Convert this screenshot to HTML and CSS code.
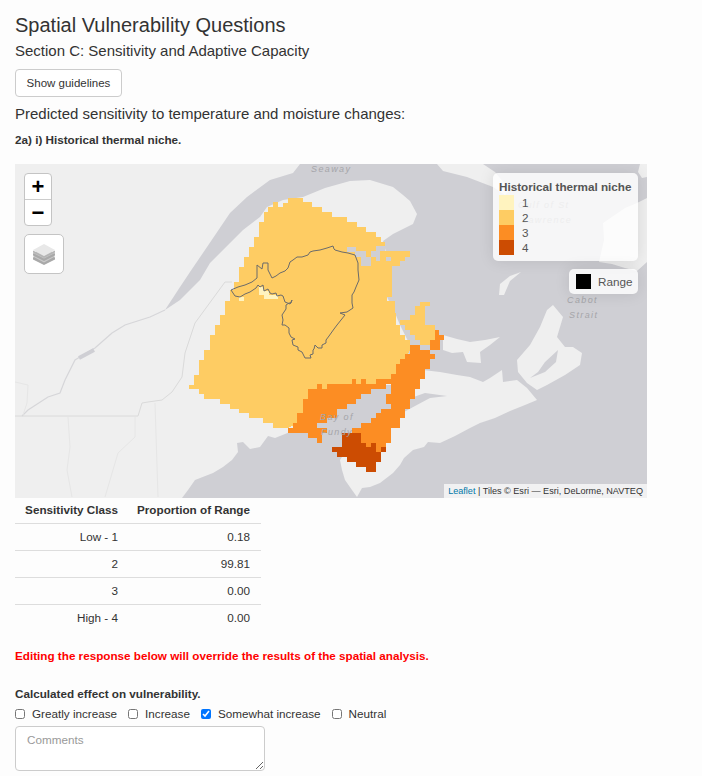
FILE: index.html
```html
<!DOCTYPE html>
<html lang="en">
<head>
  <meta charset="UTF-8">
  <title>Spatial Vulnerability Questions</title>
  <link rel="stylesheet" href="styles.css">
</head>
<body>
  <h1>Spatial Vulnerability Questions</h1>
  <h2>Section C: Sensitivity and Adaptive Capacity</h2>
  <button class="btn">Show guidelines</button>
  <h3>Predicted sensitivity to temperature and moisture changes:</h3>
  <p class="question">2a) i) Historical thermal niche.</p>

  <div class="map">
    <svg class="map-svg" viewBox="15 164 632 334" width="632" height="334">
      <rect class="land" x="15" y="164" width="632" height="334"/>
      <!-- water -->
      <path class="water" d="M300 164 L293 173 L270 180 L247 197 L230 213 L207 247 L190 272 L180 287 L165 310 L180 300 L200 280 L210 263 L230 243 L243 230 L260 217 L267 207 L283 200 L303 197 L325 188 L350 181 L370 180 L393 187 L403 195 L410 201 L417 214 L413 224 L393 234 L383 241 L386 252 L392 277 L387 297 L395 313 L400 325 L410 345 L405 370 L395 385 L370 385 L310 395 L295 430 L275 438 L268 436 L260 447 L250 449 L243 442 L237 443 L238 452 L232 460 L223 467 L213 473 L195 480 L188 490 L182 498 L647 498 L647 164 Z"/>
      <path class="land" d="M437 164 L443 171 L467 177 L493 187 L505 195 L510 190 L495 172 L483 164 Z"/>
      <path class="land" d="M640 164 L638 172 L642 178 L647 177 L647 164 Z"/>
      <path class="land" d="M647 198 L637 203 L625 208 L603 223 L604 240 L599 262 L612 264 L625 268 L637 271 L647 262 Z"/>
      <!-- maritimes -->
      <path class="land" d="M340 460 L342 470 L345 480 L352 490 L357 497 L362 488 L370 487 L380 483 L393 473 L400 465 L404 458 L413 450 L424 447 L428 442 L440 443 L455 436 L470 428 L480 423 L495 418 L510 411 L525 405 L537 400 L527 388 L517 380 L503 382 L502 370 L490 378 L483 382 L470 377 L457 375 L440 372 L423 370 L418 372 L412 385 L400 400 L395 415 L385 430 L370 440 L350 445 Z"/>
      <path class="water" d="M408 399 L425 393 L447 396 L430 398 L415 406 L404 412 Z"/>
      <path class="land" d="M443 335 L457 339 L470 342 L485 340 L500 337 L490 345 L480 352 L481 363 L467 362 L463 352 L452 353 L443 350 Z"/>
      <path class="land" d="M553 305 L563 317 L557 337 L565 347 L573 347 L582 353 L580 365 L565 375 L547 385 L537 390 L527 383 L518 372 L517 360 L530 345 L540 327 L547 310 Z"/>
      <path class="water" d="M530 378 L538 372 L545 362 L558 350 L556 362 L545 372 Z"/>
      <path class="land" d="M499 295 L500 284 L510 276 L521 272 L510 281 L504 295 Z"/>
      <!-- rivers and borders -->
      <path class="river" d="M165 310 L150 317 L125 325 L112 333 L95 348 L75 360 L65 380 L60 393 L48 397 L28 410 L22 416"/>
      <path class="wide-river" d="M79 358 L94 350"/>
      <path class="border" d="M15 416 L138 416 L142 403 L148 402 L162 400 L172 392 L182 377 L185 353 L195 323 L225 282 L232 282"/>
      <path class="border-thin" d="M155 403 L158 497 M135 417 L135 437 L118 453 L105 497 M68 417 L70 447 L67 470 L72 497 M15 382 L28 385 L27 403 L23 415"/>

      <!-- raster -->
      <g class="raster">
        <path class="c2" d="M288 198 L303 198 L303 202 L312 202 L312 207 L322 207 L322 212 L332 212 L332 217 L347 217 L347 222 L357 222 L357 227 L366 227 L366 232 L376 232 L376 237 L381 237 L381 242 L385 242 L385 251 L410 251 L410 257 L405 257 L405 261 L400 261 L400 266 L392 266 L392 297 L387 297 L387 301 L395 301 L395 313 L396 313 L396 325 L400 325 L400 335 L405 335 L405 340 L410 340 L410 350 L400 370 L380 388 L320 395 L305 420 L288 428 L273 428 L273 423 L263 423 L263 418 L249 418 L249 413 L239 413 L239 409 L230 409 L230 404 L220 404 L220 399 L204 399 L204 394 L199 394 L199 389 L189 389 L189 385 L194 385 L194 375 L199 375 L199 360 L204 360 L204 350 L210 350 L210 335 L215 335 L215 325 L220 325 L220 315 L225 315 L225 301 L230 301 L230 290 L234 290 L234 282 L239 282 L239 267 L244 267 L244 257 L249 257 L249 247 L254 247 L254 237 L259 237 L259 222 L264 222 L264 212 L268 212 L268 207 L273 207 L273 202 L278 202 L278 207 L283 207 L283 203 L288 203 Z"/>
        <path class="c2" d="M420 302 L430 302 L430 306 L425 306 L425 325 L435 325 L435 340 L430 340 L430 345 L420 345 L420 340 L415 340 L415 335 L410 335 L410 330 L405 330 L405 325 L400 325 L400 320 L410 320 L410 315 L415 315 L415 306 L420 306 Z"/>
        <path class="hole" d="M347 247 H356 V251 H366 V257 H371 V266 H361 V257 H355 V252 H347 Z M371 251 H376 V246 H385 V251 H380 V261 H376 V257 H371 Z M386 257 H391 V261 H386 Z"/>
        <path class="c1" d="M239 297 h5 v4 h-5 Z M259 287 h5 v4 h5 v4 h9 v4 h-14 v-4 h-5 Z"/>
        <path class="c3" d="M288 428 L293 428 L293 423 L297 423 L297 413 L303 413 L303 399 L308 399 L308 389 L317 389 L317 384 L322 384 L322 389 L327 389 L327 384 L352 384 L352 379 L356 379 L356 384 L361 384 L361 379 L366 379 L366 384 L376 384 L376 379 L391 379 L391 374 L396 374 L396 364 L400 364 L400 359 L405 359 L405 354 L410 354 L410 345 L420 345 L420 350 L430 350 L430 340 L435 340 L435 330 L439 330 L439 335 L444 335 L444 340 L440 340 L440 350 L430 350 L430 354 L435 354 L435 359 L430 359 L430 369 L425 369 L425 379 L420 379 L420 389 L415 389 L415 399 L410 399 L410 409 L405 409 L405 418 L400 418 L400 428 L391 428 L391 443 L386 443 L386 447 L381 447 L381 452 L376 452 L376 443 L371 443 L371 447 L366 447 L366 443 L361 443 L361 433 L352 433 L352 428 L361 428 L361 423 L371 423 L371 418 L376 418 L376 413 L381 413 L381 409 L391 409 L391 404 L386 404 L386 394 L391 394 L391 384 L386 384 L386 389 L371 389 L371 394 L361 394 L361 399 L356 399 L356 404 L347 404 L347 409 L337 409 L337 418 L327 418 L327 423 L317 423 L317 428 L327 428 L327 433 L322 433 L322 443 L317 443 L317 438 L308 438 L308 433 L293 433 L293 438 L293 433 L288 433 Z"/>
        <path class="c4" d="M342 433 L361 433 L361 443 L366 443 L366 447 L371 447 L371 443 L376 443 L376 452 L381 452 L381 462 L376 462 L376 472 L366 472 L366 467 L356 467 L356 462 L347 462 L347 457 L337 457 L337 452 L332 452 L332 447 L342 447 Z M381 447 h5 v5 h-5 Z"/>
      </g>

      <path class="outline" d="M231 290 L238 287 L245 285 L252 282 L257 278 L257 265 L262 269 L263 263 L268 263 L268 270 L272 278 L276 276 L280 273 L285 271 L288 268 L290 262 L293 260 L297 257 L302 257 L308 255 L310 252 L313 251 L320 250 L327 248 L333 246 L334 249 L335 250 L342 252 L348 253 L355 255 L358 263 L358 270 L359 280 L356 287 L354 292 L352 295 L352 303 L353 308 L347 312 L340 313 L345 315 L341 320 L337 325 L334 329 L329 336 L326 340 L326 343 L322 345 L322 348 L318 348 L315 345 L314 349 L313 350 L313 354 L310 355 L311 358 L307 358 L305 358 L302 352 L298 350 L298 347 L293 345 L292 340 L295 339 L291 337 L289 333 L289 328 L285 325 L282 325 L283 320 L282 315 L286 309 L286 305 L289 303 L291 303 L292 300 L290 304 L285 302 L283 296 L281 295 L277 296 L276 293 L272 294 L270 293 L268 289 L264 291 L263 285 L260 287 L258 285 L256 288 L250 292 L245 294 L240 297 L235 296 Z"/>

      <!-- labels -->
      <text class="label" x="311" y="172">Seaway</text>
      <text class="label" x="320" y="420">Bay of</text>
      <text class="label" x="321" y="435">Fundy</text>
      <text class="label" x="567" y="303">Cabot</text>
      <text class="label" x="569" y="318">Strait</text>
      <text class="label" x="518" y="208">Gulf of St</text>
      <text class="label" x="522" y="223">Lawrence</text>
    </svg>

    <div class="controls">
      <div class="zoom">
        <a class="zoom-btn">+</a>
        <a class="zoom-btn">&minus;</a>
      </div>
      <div class="layers">
        <svg width="24" height="23" viewBox="0 0 24 23">
          <path fill="#a9a9a9" d="M12 9 L23 14.5 V16.5 L12 22 L1 16.5 V14.5 Z"/>
          <path fill="#c9c9c9" d="M12 8 L23 13.5 L12 19.5 L1 13.5 Z"/>
          <path fill="#a9a9a9" d="M12 5 L23 10.5 V12.5 L12 18 L1 12.5 V10.5 Z"/>
          <path fill="#c9c9c9" d="M12 4.5 L23 10 L12 15.5 L1 10 Z"/>
          <path fill="#b5b5b5" d="M1 7.5 L12 13 L23 7.5 V9.5 L12 15 L1 9.5 Z"/>
          <path fill="#e8e8e8" d="M12 1 L23 7 L12 13 L1 7 Z"/>
        </svg>
      </div>
    </div>

    <div class="legend">
      <div class="legend-title">Historical thermal niche</div>
      <div class="legend-row"><i class="swatch s1"></i>1</div>
      <div class="legend-row"><i class="swatch s2"></i>2</div>
      <div class="legend-row"><i class="swatch s3"></i>3</div>
      <div class="legend-row"><i class="swatch s4"></i>4</div>
    </div>
    <div class="legend legend-range">
      <i class="range-box"></i>Range
    </div>
    <div class="attribution"><a>Leaflet</a> | Tiles &copy; Esri &mdash; Esri, DeLorme, NAVTEQ</div>
  </div>

  <table class="results">
    <thead>
      <tr><th>Sensitivity Class</th><th>Proportion of Range</th></tr>
    </thead>
    <tbody>
      <tr><td>Low - 1</td><td>0.18</td></tr>
      <tr><td>2</td><td>99.81</td></tr>
      <tr><td>3</td><td>0.00</td></tr>
      <tr><td>High - 4</td><td>0.00</td></tr>
    </tbody>
  </table>

  <p class="warning">Editing the response below will override the results of the spatial analysis.</p>

  <div class="field-label">Calculated effect on vulnerability.</div>
  <div class="options">
    <label><input type="checkbox">Greatly increase</label>
    <label><input type="checkbox">Increase</label>
    <label><input type="checkbox" checked>Somewhat increase</label>
    <label><input type="checkbox">Neutral</label>
  </div>
  <textarea class="comments" placeholder="Comments"></textarea>
</body>
</html>
```

FILE: styles.css
```css
body {
  margin: 0;
  padding: 14px 15px 0;
  background: #fdfdfd;
  color: #333;
  font-family: "Liberation Sans", Arial, sans-serif;
  font-size: 11.7px;
  line-height: 1.42857;
  height: 762px;
  overflow: hidden;
}
h1 {
  margin: 0;
  font-size: 20px;
  font-weight: 400;
  line-height: 22px;
}
h2 {
  margin: 5px 0 0;
  font-size: 15px;
  font-weight: 400;
  line-height: 20px;
}
.btn {
  display: block;
  margin-top: 8px;
  width: 107px;
  height: 28px;
  padding: 0;
  background: #fff;
  border: 1px solid #ccc;
  border-radius: 4px;
  color: #333;
  font: 11.5px "Liberation Sans", Arial, sans-serif;
}
h3 {
  margin: 7px 0 0;
  font-size: 15px;
  font-weight: 400;
  line-height: 20px;
}
.question {
  margin: 7px 0 0;
  font-weight: 700;
  line-height: 17px;
}

.map {
  position: relative;
  margin-top: 16px;
  width: 632px;
  height: 334px;
  overflow: hidden;
}
.map-svg {
  display: block;
}
.land { fill: #efefef; }
.water { fill: #cfcfd4; }
.river { fill: none; stroke: #d6d6d9; stroke-width: 1.2; }
.wide-river { fill: none; stroke: #cfcfd4; stroke-width: 4; }
.border { fill: none; stroke: #dadada; stroke-width: 1; }
.border-thin { fill: none; stroke: #e6e6e6; stroke-width: 1; }
.raster path { shape-rendering: crispEdges; }
.c1 { fill: #fff3bf; }
.c2 { fill: #fecc63; }
.c3 { fill: #fc8d23; }
.c4 { fill: #cc4c02; }
.hole { fill: #cfcfd4; }
.outline { fill: none; stroke: #6b6b6b; stroke-width: 1; }
.label {
  fill: #a5a5a9;
  font-family: "Liberation Sans", Arial, sans-serif;
  font-size: 9px;
  font-style: italic;
  letter-spacing: 1.4px;
}

.controls {
  position: absolute;
  top: 9px;
  left: 9px;
}
.zoom {
  width: 26px;
  background: #fff;
  border: 1px solid #c4c4c4;
  border-radius: 4px;
}
.zoom-btn {
  display: block;
  height: 25px;
  color: #000;
  font: 700 22px/25px "Liberation Sans", Arial, sans-serif;
  text-align: center;
}
.zoom-btn + .zoom-btn {
  border-top: 1px solid #ccc;
}
.layers {
  display: flex;
  align-items: center;
  justify-content: center;
  margin-top: 8px;
  width: 38px;
  height: 38px;
  background: #fff;
  border: 1px solid #c4c4c4;
  border-radius: 5px;
}
.legend {
  position: absolute;
  top: 9px;
  right: 9px;
  width: 145px;
  padding: 6px 6px;
  background: rgba(255, 255, 255, 0.8);
  border-radius: 5px;
  box-shadow: 0 0 15px rgba(0, 0, 0, 0.1);
  color: #555;
  line-height: 15px;
  box-sizing: border-box;
  white-space: nowrap;
}
.legend-title {
  height: 16px;
  font-weight: 700;
}
.legend-row {
  display: flex;
  height: 15px;
  line-height: 15px;
}
.swatch {
  width: 15px;
  height: 15px;
  margin-right: 8px;
}
.s1 { background: #fff3bf; }
.s2 { background: #fecc63; }
.s3 { background: #fc8d23; }
.s4 { background: #cc4c02; }
.legend-range {
  display: flex;
  align-items: center;
  top: 105px;
  width: 69px;
  height: 25px;
  padding: 5px 6px 5px 7px;
}
.range-box {
  flex: none;
  width: 15px;
  height: 15px;
  margin-right: 7px;
  background: #000;
}
.attribution {
  position: absolute;
  right: 0;
  bottom: 0;
  padding: 0 4px;
  background: rgba(255, 255, 255, 0.7);
  color: #333;
  font-size: 9.1px;
  line-height: 14px;
}
.attribution a {
  color: #0078a8;
}

.results {
  border-collapse: collapse;
  width: 246px;
  white-space: nowrap;
}
.results th,
.results td {
  padding: 0 11px 0 0;
  height: 26px;
  text-align: right;
  border-bottom: 1px solid #ddd;
}
.results th:first-child,
.results td:first-child {
  width: 103px;
}
.results th {
  height: 25px;
  font-weight: 700;
}
.results tbody tr:last-child td {
  border-bottom: 0;
}
.warning {
  margin: 16px 0 0;
  color: #f00;
  font-weight: 700;
  line-height: 17px;
}
.field-label {
  margin-top: 21px;
  font-weight: 700;
  line-height: 17px;
}
.options {
  display: flex;
  gap: 11px;
  margin-top: 3px;
  line-height: 17px;
}
.options label {
  display: flex;
  align-items: center;
}
.options input {
  width: 10px;
  height: 10px;
  margin: 0 7px 0 0;
}
.comments {
  display: block;
  margin-top: 4px;
  width: 250px;
  height: 45px;
  padding: 6px 11px;
  box-sizing: border-box;
  background: #fff;
  border: 1px solid #ccc;
  border-radius: 4px;
  font: 11.7px "Liberation Sans", Arial, sans-serif;
}
.comments::placeholder {
  color: #999;
}
```
